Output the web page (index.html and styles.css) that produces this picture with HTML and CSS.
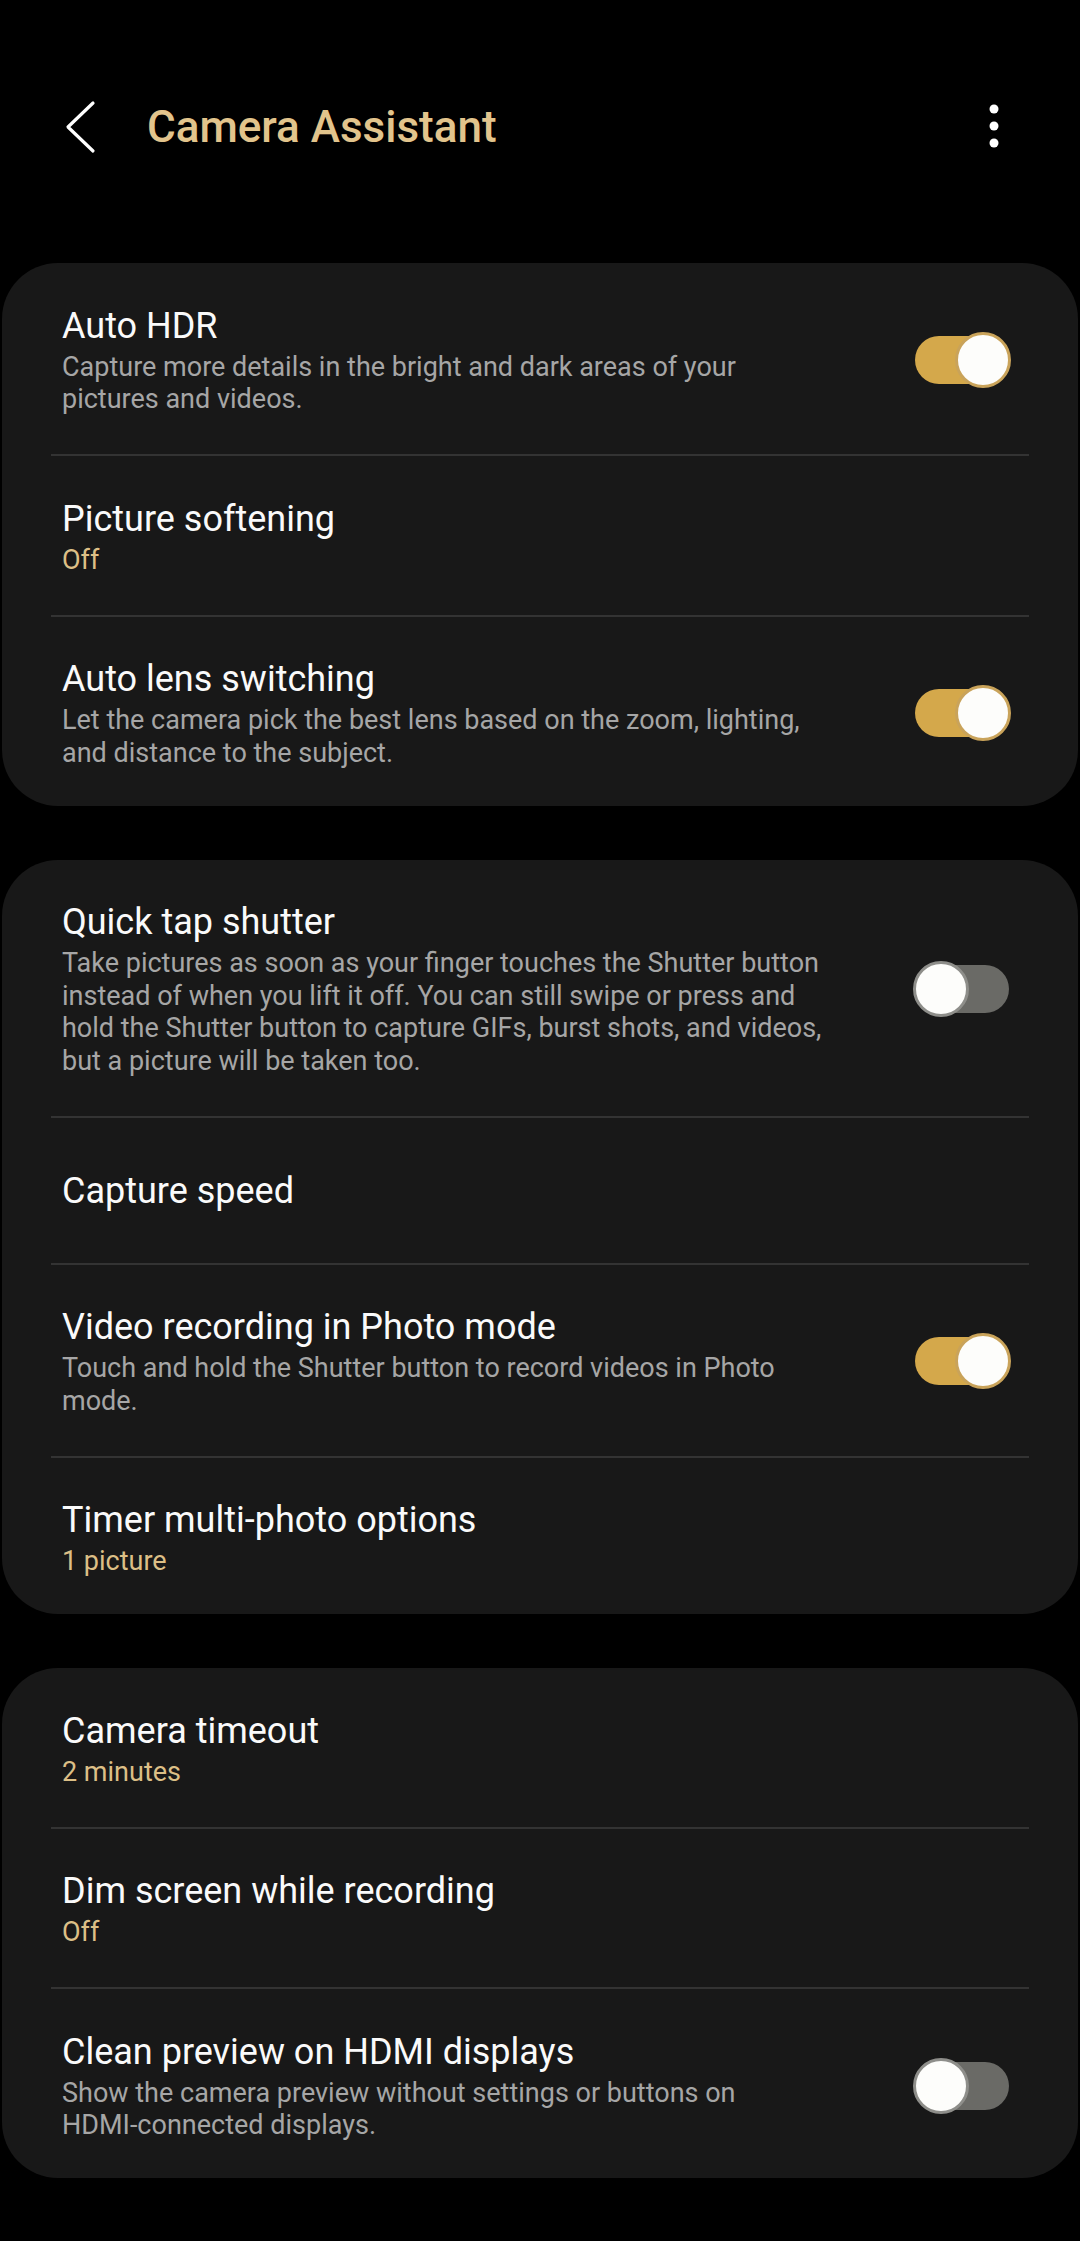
FILE: index.html
```html
<!DOCTYPE html>
<html lang="en">
<head>
  <meta charset="UTF-8" />
  <meta name="viewport" content="width=device-width, initial-scale=1.0" />
  <title>Camera Assistant</title>
  <link rel="stylesheet" href="styles.css">
</head>
<body>
<header class="app-bar">
  <button class="icon-btn back" aria-label="Back">
    <svg width="40" height="60" viewBox="0 0 40 60">
      <path d="M33 6 L8 30 L33 54" fill="none" stroke="#fff" stroke-width="3.2" stroke-linecap="round" stroke-linejoin="round"/>
    </svg>
  </button>
  <h1 class="app-title">Camera Assistant</h1>
  <button class="icon-btn more" aria-label="More options">
    <svg width="12" height="50" viewBox="0 0 12 50">
      <circle cx="6" cy="8" r="4.5" fill="#fff"/>
      <circle cx="6" cy="25" r="4.5" fill="#fff"/>
      <circle cx="6" cy="42" r="4.5" fill="#fff"/>
    </svg>
  </button>
</header>

<main class="settings">
  <section class="card">
    <div class="row">
      <div class="row-text">
        <div class="row-title">Auto HDR</div>
        <div class="row-desc">Capture more details in the bright and dark areas of your pictures and videos.</div>
      </div>
      <span class="switch on"></span>
    </div>
    <div class="row">
      <div class="row-text">
        <div class="row-title">Picture softening</div>
        <div class="row-value">Off</div>
      </div>
    </div>
    <div class="row">
      <div class="row-text">
        <div class="row-title">Auto lens switching</div>
        <div class="row-desc">Let the camera pick the best lens based on the zoom, lighting, and distance to the subject.</div>
      </div>
      <span class="switch on"></span>
    </div>
  </section>

  <section class="card">
    <div class="row">
      <div class="row-text">
        <div class="row-title">Quick tap shutter</div>
        <div class="row-desc">Take pictures as soon as your finger touches the Shutter button instead of when you lift it off. You can still swipe or press and hold the Shutter button to capture GIFs, burst shots, and videos, but a picture will be taken too.</div>
      </div>
      <span class="switch"></span>
    </div>
    <div class="row">
      <div class="row-text">
        <div class="row-title">Capture speed</div>
      </div>
    </div>
    <div class="row">
      <div class="row-text">
        <div class="row-title">Video recording in Photo mode</div>
        <div class="row-desc">Touch and hold the Shutter button to record videos in Photo mode.</div>
      </div>
      <span class="switch on"></span>
    </div>
    <div class="row">
      <div class="row-text">
        <div class="row-title">Timer multi-photo options</div>
        <div class="row-value">1 picture</div>
      </div>
    </div>
  </section>

  <section class="card">
    <div class="row">
      <div class="row-text">
        <div class="row-title">Camera timeout</div>
        <div class="row-value">2 minutes</div>
      </div>
    </div>
    <div class="row">
      <div class="row-text">
        <div class="row-title">Dim screen while recording</div>
        <div class="row-value">Off</div>
      </div>
    </div>
    <div class="row">
      <div class="row-text">
        <div class="row-title">Clean preview on HDMI displays</div>
        <div class="row-desc">Show the camera preview without settings or buttons on <span class="nowrap">HDMI-connected</span> displays.</div>
      </div>
      <span class="switch"></span>
    </div>
  </section>
</main>
</body>
</html>
```

FILE: styles.css
```css
body {
  background: #000;
  color: #fafafa;
  font-family: Roboto, "Noto Sans", sans-serif;
  margin: 0;
  padding: 0;
}
.app-bar {
  display: flex;
  align-items: center;
  height: 110px;
  margin-top: 72px;
  padding: 0 80px 0 60px;
}
.icon-btn {
  background: none;
  border: none;
  padding: 0;
  display: flex;
  align-items: center;
  justify-content: center;
  cursor: pointer;
}
.back {
  width: 40px;
  height: 60px;
}
.app-title {
  flex: 1;
  margin: 0 0 0 47px;
  font-size: 44px;
  font-weight: 500;
  color: #e2c48c;
}
.more {
  width: 12px;
  height: 50px;
  margin-top: -2px;
}
.settings {
  padding: 81px 2px 40px;
  display: flex;
  flex-direction: column;
  gap: 54px;
}
.card {
  background: #181818;
  border-radius: 56px;
}
.row {
  display: flex;
  align-items: center;
  min-height: 147px;
  box-sizing: border-box;
  margin: 0 49px;
  padding: 40.5px 18px 38.5px 11px;
}
.row + .row {
  border-top: 2px solid #333;
}
.row:last-child {
  padding-bottom: 36.5px;
}
.row-text {
  flex: 1;
  max-width: 772px;
}
.row-title {
  font-size: 36px;
  line-height: 44px;
  color: #fafafa;
}
.row-desc, .row-value {
  margin-top: 3px;
  font-size: 27px;
  line-height: 32.5px;
}
.row-desc {
  color: #a6a6a6;
}
.row-value {
  color: #dcbf86;
}
.nowrap {
  white-space: nowrap;
}
.switch {
  position: relative;
  flex: none;
  width: 98px;
  height: 56px;
  margin-left: auto;
}
.switch::before {
  content: "";
  position: absolute;
  top: 4px;
  bottom: 4px;
  left: 2px;
  right: 2px;
  border-radius: 24px;
  background: #6a6a66;
}
.switch::after {
  content: "";
  position: absolute;
  top: 0;
  left: 0;
  width: 56px;
  height: 56px;
  box-sizing: border-box;
  border-radius: 50%;
  background: #fdfdfb;
  border: 3px solid #8e8e8a;
}
.switch.on::before {
  background: #d4a84b;
}
.switch.on::after {
  left: auto;
  right: 0;
  border-color: #c9a35a;
}
```
